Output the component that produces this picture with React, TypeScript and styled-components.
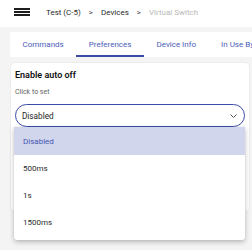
import styled, { createGlobalStyle } from "styled-components";

const GlobalStyle = createGlobalStyle`
	body {
		margin: 0;
		background: #f4f4f4;
		font-family: Roboto, "Liberation Sans", sans-serif;
		overflow: hidden;
	}
`;

const Page = styled.div`
	width: 252px;
	height: 250px;
	display: flex;
	flex-direction: column;
`;

const Header = styled.header`
	height: 27px;
	background: #fff;
	display: flex;
	align-items: center;
	padding: 0 0 3px 14px;
	box-sizing: border-box;
	gap: 16px;
	flex-shrink: 0;
`;

const Burger = styled.div`
	width: 16px;
	height: 8px;
	display: flex;
	flex-direction: column;
	justify-content: space-between;

	span {
		display: block;
		height: 2px;
		background: #1e1e1e;
	}
`;

const Crumbs = styled.nav`
	display: flex;
	align-items: center;
	gap: 8px;
	font-size: 8px;
	white-space: nowrap;
`;

const Crumb = styled.span<{ $muted?: boolean }>`
	color: ${(p) => (p.$muted ? "#b8b8b8" : "#2a2a2a")};
`;

const Sep = styled.span`
	color: #444;
	font-size: 8px;
`;

const Tabs = styled.div`
	margin: 5px 0 0 10px;
	height: 25px;
	background: #fff;
	display: flex;
	flex-shrink: 0;
	overflow: hidden;
`;

const Tab = styled.div<{ $active?: boolean }>`
	flex-shrink: 0;
	display: flex;
	align-items: center;
	padding: 2px 12.5px 0;
	font-size: 8px;
	color: #4a5cb8;
	white-space: nowrap;
	box-sizing: border-box;
	border-bottom: 2px solid ${(p) => (p.$active ? "#3b4aa5" : "transparent")};
`;

const Card = styled.section`
	margin: 6px 3px 0 11px;
	height: 148px;
	background: #fff;
	border-radius: 4px;
	box-shadow: 0 0 0 1px #ececec;
	padding: 6px 4px 0 4px;
	box-sizing: border-box;
`;

const Title = styled.h3`
	margin: 0;
	font-size: 9px;
	font-weight: 600;
	color: #111;
	line-height: 12px;
`;

const Hint = styled.div`
	margin-top: 6px;
	font-size: 7px;
	color: #666;
	line-height: 10px;
`;

const SelectWrap = styled.div`
	position: relative;
	margin-top: 7px;
	width: 230px;
`;

const SelectBox = styled.div`
	height: 23px;
	border: 1.5px solid #3d4ca8;
	border-radius: 12px;
	box-sizing: border-box;
	display: flex;
	align-items: center;
	justify-content: space-between;
	padding: 0 7px 0 6px;
	font-size: 8.2px;
	color: #1e1e1e;
`;

const Menu = styled.ul`
	position: absolute;
	left: -1px;
	top: 23px;
	width: 231px;
	margin: 0;
	padding: 0 0 4px;
	list-style: none;
	background: #fff;
	box-shadow: 0 2px 5px rgba(0, 0, 0, 0.25), 0 0 1px rgba(0, 0, 0, 0.15);
	border-radius: 0 0 3px 3px;
`;

const Item = styled.li<{ $selected?: boolean }>`
	height: ${(p) => (p.$selected ? 28 : 27)}px;
	display: flex;
	align-items: center;
	padding-left: 9px;
	font-size: 8px;
	color: ${(p) => (p.$selected ? "#4456b0" : "#2a2a2a")};
	background: ${(p) => (p.$selected ? "#d2d6ec" : "#fff")};
`;

const options = ["Disabled", "500ms", "1s", "1500ms"];

export default function App() {
	return (
		<Page>
			<GlobalStyle />
			<Header>
				<Burger>
					<span />
					<span />
					<span />
				</Burger>
				<Crumbs>
					<Crumb>Test (C-5)</Crumb>
					<Sep>&gt;</Sep>
					<Crumb>Devices</Crumb>
					<Sep>&gt;</Sep>
					<Crumb $muted>Virtual Switch</Crumb>
				</Crumbs>
			</Header>
			<Tabs>
				<Tab>Commands</Tab>
				<Tab $active>Preferences</Tab>
				<Tab>Device Info</Tab>
				<Tab>In Use By</Tab>
			</Tabs>
			<Card>
				<Title>Enable auto off</Title>
				<Hint>Click to set</Hint>
				<SelectWrap>
					<SelectBox>
						<span>Disabled</span>
						<svg width="7" height="4" viewBox="0 0 7 4">
							<path d="M0.5 0.5l3 3 3-3" fill="none" stroke="#555" strokeWidth="1" />
						</svg>
					</SelectBox>
					<Menu>
						{options.map((o, i) => (
							<Item key={o} $selected={i === 0}>
								{o}
							</Item>
						))}
					</Menu>
				</SelectWrap>
			</Card>
		</Page>
	);
}
